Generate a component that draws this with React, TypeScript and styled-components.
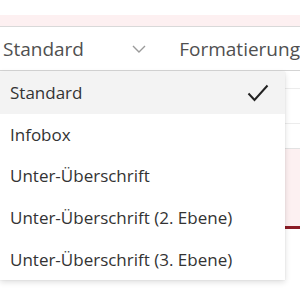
import React from "react";
import styled, { createGlobalStyle } from "styled-components";

const GlobalStyle = createGlobalStyle`
  html, body {
    margin: 0;
    padding: 0;
    background: #ffffff;
    font-family: "Open Sans", "Noto Sans", sans-serif;
  }
`;

const Page = styled.div`
  position: relative;
  width: 300px;
  height: 300px;
  overflow: hidden;
  background: #ffffff;
`;

const TopSpace = styled.div`
  height: 15px;
`;

const PinkBand = styled.div`
  height: 11px;
  background: #fdf0f1;
  border-bottom: 1px solid #d9d9d9;
`;

const Toolbar = styled.div`
  display: flex;
  align-items: center;
  height: 43px;
  border-bottom: 1px solid #d4d4d4;
  white-space: nowrap;
`;

const Select = styled.div`
  display: flex;
  align-items: center;
  width: 176px;
  padding-left: 3px;
  box-sizing: border-box;
`;

const SelectValue = styled.span`
  flex: 1;
  font-size: 19px;
  color: #505050;
`;

const Chevron = styled.svg`
  margin-right: 29px;
`;

const ToolLabel = styled.span`
  margin-left: 4px;
  font-size: 19px;
  color: #505050;
`;

const Content = styled.div`
  display: flex;
  flex-direction: column;
`;

const Row = styled.div<{ $h: number; $bg?: string; $line?: string; $lw?: number }>`
  height: ${(p) => p.$h}px;
  background: ${(p) => p.$bg || "transparent"};
  border-bottom: ${(p) => p.$lw || 1}px solid ${(p) => p.$line || "#ececec"};
`;

const Menu = styled.ul`
  position: absolute;
  top: 72px;
  left: 0;
  width: 285px;
  margin: 0;
  padding: 0;
  list-style: none;
  background: #ffffff;
  box-shadow: 0 2px 6px rgba(0, 0, 0, 0.14), 0 0 1px rgba(0, 0, 0, 0.12);
`;

const Item = styled.li<{ $selected?: boolean }>`
  display: flex;
  align-items: center;
  justify-content: space-between;
  height: 41.6px;
  padding: 0 16px 0 10px;
  font-size: 17px;
  color: #333333;
  background: ${(p) => (p.$selected ? "#f3f3f3" : "transparent")};
`;

const items = [
  "Standard",
  "Infobox",
  "Unter-Überschrift",
  "Unter-Überschrift (2. Ebene)",
  "Unter-Überschrift (3. Ebene)",
];

export default function App() {
  return (
    <Page>
      <GlobalStyle />
      <TopSpace />
      <PinkBand />
      <Toolbar>
        <Select>
          <SelectValue>Standard</SelectValue>
          <Chevron width="14" height="8" viewBox="0 0 14 8">
            <path d="M1 1l6 6 6-6" fill="none" stroke="#9a9a9a" strokeWidth="1.4" />
          </Chevron>
        </Select>
        <ToolLabel>Formatierung</ToolLabel>
      </Toolbar>
      <Content>
        <Row $h={17} />
        <Row $h={34} />
        <Row $h={24} $line="#e2e2e2" />
        <Row $h={77} $bg="#fdf0f1" $line="#8c1c26" $lw={3} />
      </Content>
      <Menu>
        {items.map((label, i) => (
          <Item key={label} $selected={i === 0}>
            {label}
            {i === 0 && (
              <svg width="22" height="18" viewBox="0 0 22 18">
                <path d="M1.5 9.5l6 6.5L20.5 1.5" fill="none" stroke="#222" strokeWidth="2" />
              </svg>
            )}
          </Item>
        ))}
      </Menu>
    </Page>
  );
}
